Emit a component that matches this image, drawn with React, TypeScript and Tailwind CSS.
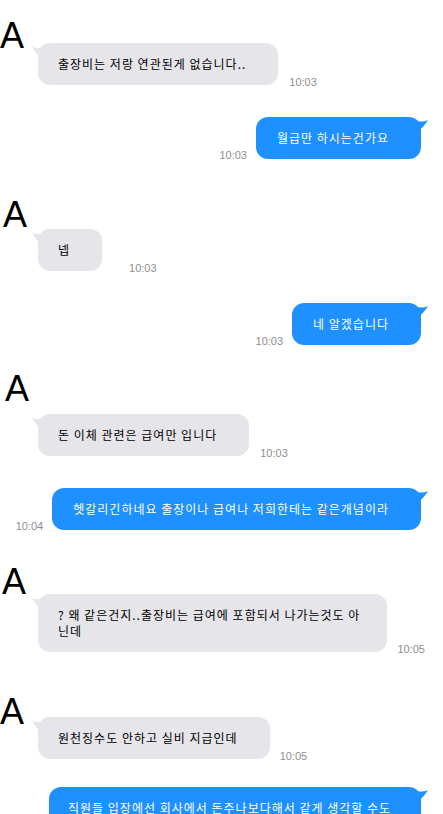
import type { ReactNode } from "react";

const KR = "font-['Noto_Sans_CJK_KR','Noto_Sans',sans-serif] tracking-[1px]";
const TIME =
  "shrink-0 whitespace-nowrap font-['Liberation_Sans',Arial,sans-serif] text-[11px] leading-none text-[#8e8e8e]";

function TailLeft() {
  return (
    <svg
      className="absolute left-[-6px] top-[4px]"
      width="10"
      height="12"
      viewBox="0 0 10 12"
    >
      <path d="M0 0 Q5 2 10 0.5 L10 12 Q4 7 0 0Z" fill="#e5e5ea" />
    </svg>
  );
}

function TailRight() {
  return (
    <svg
      className="absolute right-[-7px] top-[3px]"
      width="11"
      height="12"
      viewBox="0 0 11 12"
    >
      <path d="M11 0 Q6 2.5 0 1 L0 12 Q7 7 11 0Z" fill="#1e90ff" />
    </svg>
  );
}

function Avatar({ h, x }: { h: string; x: string }) {
  return (
    <div
      className={`${h} ${x} font-['Liberation_Sans',Arial,sans-serif] text-[36px] leading-none text-black`}
    >
      A
    </div>
  );
}

function Incoming({
  children,
  time,
  gap = "ml-[11px]",
  pad = "pr-[32px]",
}: {
  children: ReactNode;
  time: string;
  gap?: string;
  pad?: string;
}) {
  return (
    <div className="flex items-end pl-[38px]">
      <div
        className={`relative shrink-0 whitespace-nowrap rounded-[12px] bg-[#e5e5ea] py-[13px] pl-[20px] ${pad} ${KR} text-[12px] leading-[16px] text-black`}
      >
        <TailLeft />
        {children}
      </div>
      <span className={`${gap} translate-y-[3px] ${TIME}`}>{time}</span>
    </div>
  );
}

function Outgoing({
  children,
  time,
  className = "pl-[21px] pr-[32px]",
}: {
  children: ReactNode;
  time?: string;
  className?: string;
}) {
  return (
    <div className="flex items-end justify-end pr-[22px]">
      {time && <span className={`mr-[9px] translate-y-[2px] ${TIME}`}>{time}</span>}
      <div
        className={`relative shrink-0 whitespace-nowrap rounded-[12px] bg-[#1e90ff] py-[13px] ${KR} text-[12px] leading-[16px] text-white ${className}`}
      >
        <TailRight />
        {children}
      </div>
    </div>
  );
}

export default function App() {
  return (
    <div className="h-[814px] w-full overflow-hidden bg-white">
      <div className="pt-[18px]">
        <Avatar h="h-[25px]" x="pl-0" />
        <Incoming time="10:03">출장비는 저랑 연관된게 없습니다..</Incoming>
      </div>

      <div className="mt-[32px]">
        <Outgoing time="10:03">월급만 하시는건가요</Outgoing>
      </div>

      <div className="mt-[38px]">
        <Avatar h="h-[32px]" x="pl-[3px]" />
        <Incoming time="10:03" gap="ml-[27px]">
          넵
        </Incoming>
      </div>

      <div className="mt-[32px]">
        <Outgoing time="10:03">네 알겠습니다</Outgoing>
      </div>

      <div className="mt-[26px]">
        <Avatar h="h-[43px]" x="pl-[5px]" />
        <Incoming time="10:03">돈 이체 관련은 급여만 입니다</Incoming>
      </div>

      <div className="mt-[32px]">
        <Outgoing time="10:04">
          헷갈리긴하네요 출장이나 급여나 저희한테는 같은개념이라
        </Outgoing>
      </div>

      <div className="mt-[34px]">
        <Avatar h="h-[30px]" x="pl-[2px]" />
        <Incoming time="10:05" gap="ml-[10px]" pad="pr-[27px]">
          ? 왜 같은건지..출장비는 급여에 포함되서 나가는것도 아
          <br />
          닌데
        </Incoming>
      </div>

      <div className="mt-[42px]">
        <Avatar h="h-[23px]" x="pl-0" />
        <Incoming time="10:05" gap="ml-[10px]">
          원천징수도 안하고 실비 지급인데
        </Incoming>
      </div>

      <div className="mt-[28px]">
        <Outgoing className="w-[372px] pb-[10px] pl-[19px] pr-[20px]">
          직원들 입장에선 회사에서 돈주나보다해서 같게 생각할 수도
        </Outgoing>
      </div>
    </div>
  );
}
